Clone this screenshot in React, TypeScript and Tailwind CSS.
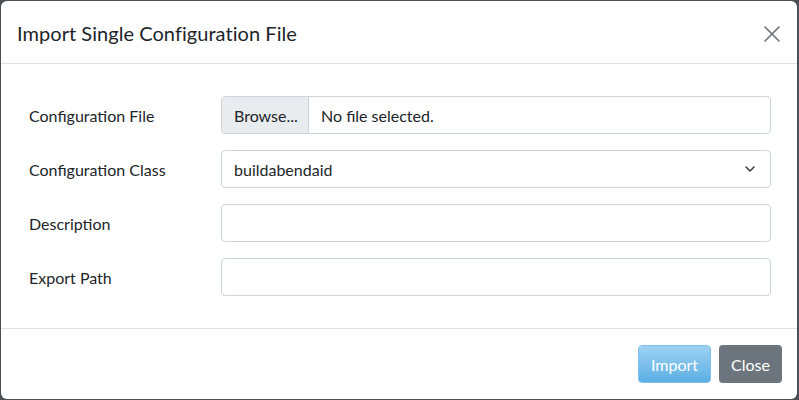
import { X, ChevronDown } from "lucide-react";

const font = { fontFamily: "Lato, 'Noto Sans', sans-serif" };

export default function App() {
  return (
    <div className="w-[799px] h-[400px] bg-[#4a4f55] pt-px pl-px pr-[2px] pb-px" style={font}>
      <div className="h-full bg-white rounded-[6px] flex flex-col text-[#212529]">
        <div className="h-[63px] shrink-0 flex items-center justify-between pl-4 pr-[11px] border-b border-[#dee2e6]">
          <h1 className="text-[20px] leading-[30px] pt-[2px] tracking-[0.05px]">Import Single Configuration File</h1>
          <X className="w-[28px] h-[28px] text-[#6c757d] mt-[3px]" strokeWidth={1.5} />
        </div>
        <div className="flex-1 pl-[28px] pr-[26px] pt-[32px] flex flex-col gap-4">
          <Row label="Configuration File">
            <div className="h-[38px] border border-[#ced4da] rounded-[4px] flex items-stretch text-[16px] overflow-hidden">
              <div className="w-[87px] bg-[#e9ecef] border-r border-[#ced4da] flex items-center pl-[12px] pt-[2px]">Browse...</div>
              <div className="flex items-center pl-[12px] pt-[2px]">No file selected.</div>
            </div>
          </Row>
          <Row label="Configuration Class">
            <div className="h-[38px] border border-[#ced4da] rounded-[4px] flex items-center justify-between pl-[12px] pr-[12px] text-[16px]">
              <span className="pt-[2px]">buildabendaid</span>
              <ChevronDown className="w-[16px] h-[16px] text-[#343a40]" strokeWidth={2.2} />
            </div>
          </Row>
          <Row label="Description">
            <div className="h-[38px] border border-[#ced4da] rounded-[4px]" />
          </Row>
          <Row label="Export Path">
            <div className="h-[38px] border border-[#ced4da] rounded-[4px]" />
          </Row>
        </div>
        <div className="h-[71px] shrink-0 border-t border-[#dee2e6] flex items-center justify-end gap-2 pr-[15px] pb-px">
          <button className="h-[38px] px-[12px] pt-[2px] rounded-[4px] text-white text-[16px] border border-[#7fc1ea] bg-gradient-to-b from-[#9dd2f2] to-[#5aaee4]">Import</button>
          <button className="h-[38px] px-[12px] pt-[2px] rounded-[4px] text-white text-[16px] bg-[#6c757d]">Close</button>
        </div>
      </div>
    </div>
  );
}

function Row({ label, children }: { label: string; children: React.ReactNode }) {
  return (
    <div className="flex items-center">
      <div className="w-[192px] shrink-0 text-[16px] pt-[2px]">{label}</div>
      <div className="flex-1">{children}</div>
    </div>
  );
}
